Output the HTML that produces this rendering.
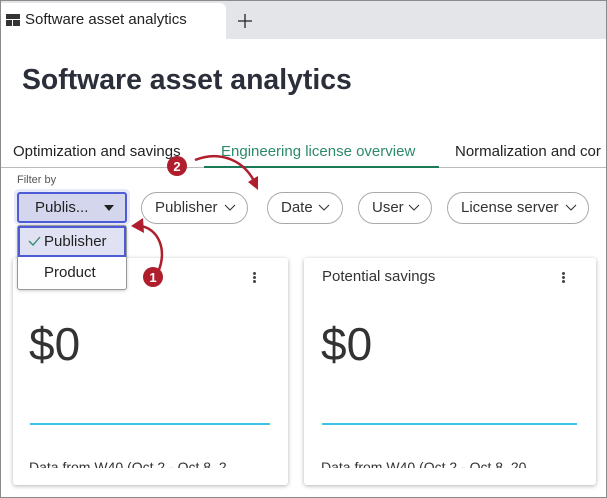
<!DOCTYPE html>
<html><head><style>
*{margin:0;padding:0;box-sizing:border-box}
body{width:607px;height:498px;overflow:hidden;background:#fff;font-family:"Liberation Sans",sans-serif;position:relative;color:#222}
.frame{position:absolute;left:0;top:0;width:607px;height:498px;border:1px solid #8a8a8a;border-top:none}
.tabbar{position:absolute;left:0;top:0;width:607px;height:39px;background:#e4e5e9;border-top:1px solid #8a8a8a}
.tab{position:absolute;left:0;top:3px;width:226px;height:36px;background:#fff;border-radius:0 6px 0 0}
.a{position:absolute;white-space:nowrap}
.pill{position:absolute;top:192px;height:32px;border:1px solid #aaa;border-radius:16px;font-size:15px;color:#333;padding:6px 0 0 13px}
.card{position:absolute;top:258px;height:227px;background:#fff;border-radius:3px;box-shadow:0 1px 4px rgba(0,0,0,.3)}
.dots{position:absolute;width:3px;height:3px;background:#444;border-radius:50%}
</style></head><body>
<div class="tabbar"></div>
<div class="tab"></div>
<svg class="a" style="left:6px;top:14px" width="14" height="12"><rect x="0" y="0" width="14" height="5" fill="#333"/><rect x="0" y="6" width="6" height="6" fill="#333"/><rect x="7" y="6" width="7" height="6" fill="#333"/></svg>
<div class="a" style="left:25px;top:11px;font-size:15px;color:#222">Software asset analytics</div>
<svg class="a" style="left:238px;top:14px" width="14" height="14"><path d="M7 0V14M0 7H14" stroke="#222" stroke-width="1.3"/></svg>
<div class="a" style="left:22px;top:64px;font-size:28.4px;font-weight:bold;color:#2b2f3a">Software asset analytics</div>
<div class="a" style="left:13px;top:143px;font-size:15px;color:#222">Optimization and savings</div>
<div class="a" style="left:221px;top:143px;font-size:15px;color:#2c8a6a">Engineering license overview</div>
<div class="a" style="left:455px;top:143px;font-size:15px;color:#222">Normalization and cor</div>
<div class="a" style="left:1px;top:167px;width:605px;height:1px;background:#bbb"></div>
<div class="a" style="left:204px;top:166px;width:235px;height:2px;background:#1d7a57"></div>
<div class="a" style="left:17px;top:174px;font-size:11px;color:#555">Filter by</div>

<div class="card" style="left:13px;width:275px"></div>
<div class="card" style="left:304px;width:292px"></div>
<div class="dots" style="left:253px;top:272px;box-shadow:0 4px #444,0 8px #444"></div>
<div class="dots" style="left:562px;top:272px;box-shadow:0 4px #444,0 8px #444"></div>
<div class="a" style="left:322px;top:268px;font-size:15px;color:#333">Potential savings</div>
<div class="a" style="left:29px;top:317px;font-size:46px;color:#333">$0</div>
<div class="a" style="left:321px;top:317px;font-size:46px;color:#333">$0</div>
<div class="a" style="left:30px;top:423px;width:240px;height:2px;background:#3dc4e0"></div>
<div class="a" style="left:322px;top:423px;width:255px;height:2px;background:#3dc4e0"></div>
<div class="a" style="left:29px;top:458px;width:232px;height:10px;overflow:hidden;font-size:14px;color:#333;line-height:18px">Data from W40 (Oct 2 - Oct 8, 2</div>
<div class="a" style="left:321px;top:458px;width:240px;height:10px;overflow:hidden;font-size:14px;color:#333;line-height:18px">Data from W40 (Oct 2 - Oct 8, 20</div>

<div class="a" style="left:14px;top:189px;width:116px;height:36px;background:#e8e9f7;border-radius:5px"></div>
<div class="a" style="left:17px;top:192px;width:110px;height:31px;background:#d4d6ee;border:2px solid #4d5bd4;border-radius:3px;font-size:15px;padding:5px 0 0 16px;color:#222">Publis...</div>
<svg class="a" style="left:104px;top:205px" width="10" height="6"><path d="M0 0H10L5 6Z" fill="#222"/></svg>
<div class="a" style="left:17px;top:225px;width:110px;height:65px;background:#fff;border:1px solid #999;border-radius:3px;box-shadow:0 1px 3px rgba(0,0,0,.2)"></div>
<div class="a" style="left:18px;top:226px;width:108px;height:31px;background:#e0e1f2;border:2px solid #4d5bd4;font-size:15px;padding:5px 0 0 24px;color:#222">Publisher</div>
<svg class="a" style="left:28px;top:236px" width="13" height="10"><path d="M1 5L5 9L12 1" stroke="#2c8a6a" stroke-width="1.3" fill="none"/></svg>
<div class="a" style="left:44px;top:264px;font-size:15px;color:#222">Product</div>
<div class="pill" style="left:141px;width:107px">Publisher</div>
<div class="pill" style="left:267px;width:76px">Date</div>
<div class="pill" style="left:358px;width:74px">User</div>
<div class="pill" style="left:447px;width:142px">License server</div>
<svg class="a" style="left:0;top:0" width="607" height="498">
<g fill="none" stroke="#333" stroke-width="1.1"><path d="M225 205l5 5 5-5"/><path d="M319 205l5 5 5-5"/><path d="M409 205l5 5 5-5"/><path d="M566 205l5 5 5-5"/></g>
<path d="M195 160C220 150 245 160 256 185" stroke="#b01e2e" stroke-width="2.5" fill="none"/><path d="M248 182L258 190L258 176Z" fill="#b01e2e"/>
<path d="M158 272C168 250 158 228 140 226" stroke="#b01e2e" stroke-width="2.5" fill="none"/><path d="M131 226L143 218L144 233Z" fill="#b01e2e"/>
<circle cx="177" cy="166" r="10" fill="#b01e2e"/><text x="177" y="171" font-size="13" font-weight="bold" fill="#fff" text-anchor="middle" font-family="Liberation Sans">2</text>
<circle cx="153" cy="277" r="10" fill="#b01e2e"/><text x="153" y="282" font-size="13" font-weight="bold" fill="#fff" text-anchor="middle" font-family="Liberation Sans">1</text>
</svg>
<div class="frame"></div>
</body></html>
